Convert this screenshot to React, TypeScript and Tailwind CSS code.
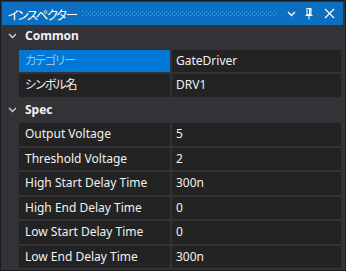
import React from 'react'

type Row =
  | { kind: 'section'; title: string }
  | { kind: 'prop'; label: string; value: string; selected?: boolean; jp?: boolean }

const rows: Row[] = [
  { kind: 'section', title: 'Common' },
  { kind: 'prop', label: 'カテゴリー', value: 'GateDriver', selected: true, jp: true },
  { kind: 'prop', label: 'シンボル名', value: 'DRV1', jp: true },
  { kind: 'section', title: 'Spec' },
  { kind: 'prop', label: 'Output Voltage', value: '5' },
  { kind: 'prop', label: 'Threshold Voltage', value: '2' },
  { kind: 'prop', label: 'High Start Delay Time', value: '300n' },
  { kind: 'prop', label: 'High End Delay Time', value: '0' },
  { kind: 'prop', label: 'Low Start Delay Time', value: '0' },
  { kind: 'prop', label: 'Low End Delay Time', value: '300n' },
]

const font = "font-['Noto_Sans','Noto_Sans_CJK_JP',sans-serif] [font-feature-settings:'palt']"

function Chevron({ className = '' }: { className?: string }) {
  return (
    <svg width="9" height="6" viewBox="0 0 9 6" className={className}>
      <path d="M1 1 L4.5 4.5 L8 1" fill="none" stroke="currentColor" strokeWidth="1.3" />
    </svg>
  )
}

function Grip() {
  return (
    <svg width="195" height="5" className="shrink-0">
      <defs>
        <pattern id="grip" width="4" height="4" patternUnits="userSpaceOnUse">
          <rect x="0" y="0" width="1" height="1" fill="#5b9fdc" />
          <rect x="2" y="2" width="1" height="1" fill="#5b9fdc" />
        </pattern>
      </defs>
      <rect width="195" height="5" fill="url(#grip)" />
    </svg>
  )
}

function PinIcon() {
  return (
    <svg width="8" height="12" viewBox="0 0 8 12">
      <rect x="2" y="0.5" width="4" height="6" fill="none" stroke="#fff" strokeWidth="1" />
      <rect x="4" y="1" width="1.5" height="5" fill="#fff" />
      <path d="M0.5 7.5 H7.5" stroke="#fff" strokeWidth="1" />
      <path d="M4 8 V11.5" stroke="#fff" strokeWidth="1" />
    </svg>
  )
}

function CloseIcon() {
  return (
    <svg width="11" height="11" viewBox="0 0 11 11">
      <path d="M1 1 L10 10 M10 1 L1 10" stroke="#fff" strokeWidth="1.2" />
    </svg>
  )
}

export default function App() {
  return (
    <div className={`w-[346px] h-[271px] bg-[#333337] border border-[#1c1c1e] pl-px pt-px pr-[2px] flex flex-col ${font}`}>
      {/* title bar */}
      <div className="h-[23px] bg-[#0c6fc0] flex items-center pl-[6px] shrink-0">
        <div className="w-[74px] shrink-0 overflow-visible">
          <span className="text-[12.5px] tracking-[-1.5px] text-white leading-none whitespace-nowrap">インスペクター</span>
        </div>
        <Grip />
        <div className="ml-[10px] text-white">
          <Chevron />
        </div>
        <div className="ml-[9px]">
          <PinIcon />
        </div>
        <div className="ml-[11px]">
          <CloseIcon />
        </div>
      </div>

      {/* property grid */}
      <div className="flex flex-col gap-y-[2px]">
        {rows.map((row, i) =>
          row.kind === 'section' ? (
            <div key={i} className="h-[22.5px] flex items-center">
              <Chevron className="ml-[6px] text-[#d4d4d4]" />
              <span className="ml-[8px] text-[12px] font-bold text-[#f1f1f1]">{row.title}</span>
            </div>
          ) : (
            <div key={i} className="h-[22.5px] flex">
              <div className="w-[17px] shrink-0" />
              <div
                className={`w-[151px] shrink-0 flex items-center pl-[6px] text-[12px] ${row.jp ? 'tracking-[-1px]' : ''} ${
                  row.selected ? 'bg-[#0078d7] text-[#93c3ea]' : 'bg-[#232323] text-[#f1f1f1]'
                }`}
              >
                {row.label}
              </div>
              <div className="ml-[2px] w-[169px] shrink-0 bg-[#232323] flex items-center pl-[4px] text-[12px] text-[#f1f1f1]">
                {row.value}
              </div>
            </div>
          )
        )}
      </div>
    </div>
  )
}
